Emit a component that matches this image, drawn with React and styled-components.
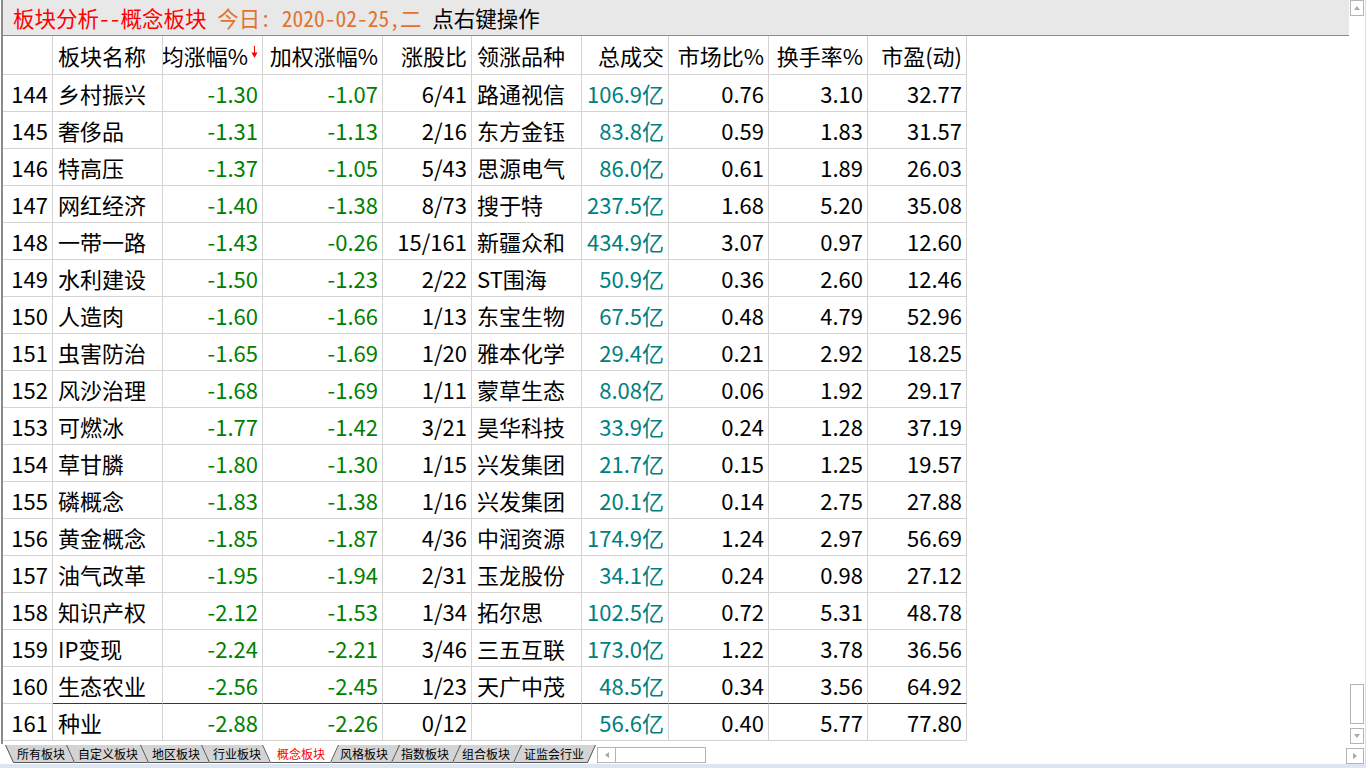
import React from 'react';
import styled, { createGlobalStyle } from 'styled-components';

const GlobalStyle = createGlobalStyle`
  html, body { margin: 0; padding: 0; background: #fff; }
  body { font-family: "Noto Sans CJK SC", "Noto Sans", sans-serif; overflow: hidden; }
  * { box-sizing: border-box; }
`;

const GRID = '#d4d4d4';
const COLS = '50px 110px 100px 120px 89px 110px 87px 100px 99px 99px';

const Frame = styled.div`
  width: 1366px;
  height: 768px;
  display: flex;
  flex-direction: column;
  background: #fff;
  overflow: hidden;
`;

const Window = styled.div`
  height: 764px;
  display: flex;
  flex-direction: column;
  border-right: 1px solid #dcdcdc;
`;

const TopArea = styled.div`
  height: 744px;
  display: flex;
`;

const Main = styled.div`
  width: 1348px;
  margin-left: 1px;
  border-left: 2px solid #8a8a8a;
  display: flex;
  flex-direction: column;
`;

const TitleBar = styled.div`
  height: 36px;
  flex: none;
  background: #e8e8e8;
  border-bottom: 1px solid #8c8c8c;
  display: flex;
  align-items: center;
  padding-left: 10px;
  font-family: "Noto Sans Mono CJK SC", "Noto Sans CJK SC", sans-serif;
  font-size: 21.5px;
  white-space: pre;
`;

const TitlePart = styled.span`
  color: ${p => p.$tone};
`;

const Table = styled.div`
  display: flex;
  flex-direction: column;
`;

const Row = styled.div`
  display: grid;
  grid-template-columns: ${COLS};
  width: 964px;
  height: ${p => p.$h}px;
`;

const Cell = styled.div`
  border-right: 1px solid ${GRID};
  border-bottom: 1px solid ${p => (p.$sel ? '#2a2aa8' : GRID)};
  display: flex;
  align-items: center;
  justify-content: ${p => (p.$left ? 'flex-start' : 'flex-end')};
  padding: 0 4px 0 5px;
  color: ${p => p.$color || '#000'};
  font-size: 22px;
  white-space: nowrap;
  overflow: hidden;
`;

const SortArrow = styled.svg`
  width: 7px;
  height: 12px;
  margin-left: 3px;
  margin-bottom: 7px;
  flex: none;
`;

const VScroll = styled.div`
  width: 16px;
  display: flex;
  flex-direction: column;
  padding: 0 1px;
`;

const ScrollBox = styled.div`
  width: ${p => p.$w || 14}px;
  height: ${p => p.$h || 16}px;
  border: 1px solid #b4b4b4;
  background: #fff;
  display: flex;
  align-items: center;
  justify-content: center;
  flex: none;
`;

const Track = styled.div`
  flex: 1;
  display: flex;
  flex-direction: column;
  justify-content: flex-end;
  padding-bottom: 4px;
`;

const Tri = styled.svg`
  width: 8px;
  height: 8px;
`;

const TabBar = styled.div`
  height: 20px;
  display: flex;
  align-items: flex-start;
  padding-left: 5px;
  padding-top: 1px;
`;

const TabStrip = styled.div`
  display: flex;
  height: 18px;
`;

const TabItem = styled.div`
  position: relative;
  width: ${p => p.$w}px;
  height: 18px;
  margin-left: ${p => (p.$first ? 0 : -16)}px;
  z-index: ${p => p.$z};
  padding-left: ${p => p.$pl}px;
  display: flex;
  align-items: center;
  font-size: 12px;
  color: ${p => (p.$active ? '#ff0000' : '#000')};
  flex: none;
`;

const TabShape = styled.svg`
  position: absolute;
  left: 0;
  top: 0;
  width: 100%;
  height: 100%;
  overflow: visible;
`;

const TabLabel = styled.span`
  position: relative;
  line-height: 1;
`;

const HScroll = styled.div`
  margin-left: 1px;
  margin-top: 2px;
  width: 109px;
  height: 16px;
  border: 1px solid #b4b4b4;
  display: flex;
  background: #fff;
`;

const HBtn = styled.div`
  width: 18px;
  border-right: 1px solid #b4b4b4;
  display: flex;
  align-items: center;
  justify-content: center;
`;

const CornerBtn = styled(ScrollBox)`
  margin-left: auto;
  margin-right: 1px;
  margin-top: 3px;
`;

const Band = styled.div`
  height: 4px;
  background: #dbe6f2;
`;

const GREEN = '#008000';
const TEAL = '#008080';

const rows = [
  ['144', '乡村振兴', '-1.30', '-1.07', '6/41', '路通视信', '106.9亿', '0.76', '3.10', '32.77'],
  ['145', '奢侈品', '-1.31', '-1.13', '2/16', '东方金钰', '83.8亿', '0.59', '1.83', '31.57'],
  ['146', '特高压', '-1.37', '-1.05', '5/43', '思源电气', '86.0亿', '0.61', '1.89', '26.03'],
  ['147', '网红经济', '-1.40', '-1.38', '8/73', '搜于特', '237.5亿', '1.68', '5.20', '35.08'],
  ['148', '一带一路', '-1.43', '-0.26', '15/161', '新疆众和', '434.9亿', '3.07', '0.97', '12.60'],
  ['149', '水利建设', '-1.50', '-1.23', '2/22', 'ST围海', '50.9亿', '0.36', '2.60', '12.46'],
  ['150', '人造肉', '-1.60', '-1.66', '1/13', '东宝生物', '67.5亿', '0.48', '4.79', '52.96'],
  ['151', '虫害防治', '-1.65', '-1.69', '1/20', '雅本化学', '29.4亿', '0.21', '2.92', '18.25'],
  ['152', '风沙治理', '-1.68', '-1.69', '1/11', '蒙草生态', '8.08亿', '0.06', '1.92', '29.17'],
  ['153', '可燃冰', '-1.77', '-1.42', '3/21', '昊华科技', '33.9亿', '0.24', '1.28', '37.19'],
  ['154', '草甘膦', '-1.80', '-1.30', '1/15', '兴发集团', '21.7亿', '0.15', '1.25', '19.57'],
  ['155', '磷概念', '-1.83', '-1.38', '1/16', '兴发集团', '20.1亿', '0.14', '2.75', '27.88'],
  ['156', '黄金概念', '-1.85', '-1.87', '4/36', '中润资源', '174.9亿', '1.24', '2.97', '56.69'],
  ['157', '油气改革', '-1.95', '-1.94', '2/31', '玉龙股份', '34.1亿', '0.24', '0.98', '27.12'],
  ['158', '知识产权', '-2.12', '-1.53', '1/34', '拓尔思', '102.5亿', '0.72', '5.31', '48.78'],
  ['159', 'IP变现', '-2.24', '-2.21', '3/46', '三五互联', '173.0亿', '1.22', '3.78', '36.56'],
  ['160', '生态农业', '-2.56', '-2.45', '1/23', '天广中茂', '48.5亿', '0.34', '3.56', '64.92'],
  ['161', '种业', '-2.88', '-2.26', '0/12', '', '56.6亿', '0.40', '5.77', '77.80'],
];

const colColor = [null, null, GREEN, GREEN, null, null, TEAL, null, null, null];
const colLeft = [false, true, false, false, false, true, false, false, false, false];

const headers = ['', '板块名称', '均涨幅%', '加权涨幅%', '涨股比', '领涨品种', '总成交', '市场比%', '换手率%', '市盈(动)'];

const tabs = [
  { label: '所有板块', w: 77, z: 1, pl: 12 },
  { label: '自定义板块', w: 90, z: 2, pl: 12 },
  { label: '地区板块', w: 77, z: 3, pl: 12 },
  { label: '行业板块', w: 77, z: 4, pl: 12 },
  { label: '概念板块', w: 77, z: 10, pl: 15, active: true },
  { label: '风格板块', w: 77, z: 8, pl: 17 },
  { label: '指数板块', w: 77, z: 7, pl: 17 },
  { label: '组合板块', w: 77, z: 6, pl: 17 },
  { label: '证监会行业', w: 90, z: 5, pl: 18 },
];

function Tab({ label, w, z, pl, active, first }) {
  return (
    <TabItem $w={w} $z={z} $pl={pl} $active={active} $first={first}>
      <TabShape viewBox={`0 0 ${w} 18`}>
        <polygon points={`0,0 ${w},0 ${w - 8},18 8,18`} fill={active ? '#ffffff' : '#d4d4d4'} />
        <polyline
          points={`0.5,0 8.5,17.5 ${w - 8.5},17.5 ${w - 0.5},0`}
          fill="none"
          stroke="#5a5a5a"
          strokeWidth="1"
        />
      </TabShape>
      <TabLabel>{label}</TabLabel>
    </TabItem>
  );
}

function Triangle({ dir }) {
  const pts = {
    up: '1,6 7,6 4,2',
    down: '1,2 7,2 4,6',
    left: '6,1 6,7 2,4',
    right: '2,1 2,7 6,4',
  }[dir];
  return (
    <Tri viewBox="0 0 8 8">
      <polygon points={pts} fill="#a8a8a8" />
    </Tri>
  );
}

export default function App() {
  return (
    <Frame>
      <GlobalStyle />
      <Window>
        <TopArea>
          <Main>
            <TitleBar>
              <TitlePart $tone="#ff0000">板块分析--概念板块</TitlePart>
              <TitlePart $tone="#e2732f"> 今日: 2020-02-25,二</TitlePart>
              <TitlePart $tone="#000"> 点右键操作</TitlePart>
            </TitleBar>
            <Table>
              <Row $h={39}>
                {headers.map((h, i) => (
                  <Cell key={i} $left={colLeft[i]}>
                    {h}
                    {i === 2 && (
                      <SortArrow viewBox="0 0 7 12">
                        <line x1="3.5" y1="0" x2="3.5" y2="9" stroke="#ff0000" strokeWidth="1" />
                        <polygon points="0.5,6.5 6.5,6.5 3.5,12" fill="#ff0000" />
                      </SortArrow>
                    )}
                  </Cell>
                ))}
              </Row>
              {rows.map((r, ri) => (
                <Row key={r[0]} $h={37}>
                  {r.map((v, ci) => (
                    <Cell
                      key={ci}
                      $left={colLeft[ci]}
                      $color={colColor[ci]}
                      $sel={ri === rows.length - 2 && ci > 0}
                    >
                      {v}
                    </Cell>
                  ))}
                </Row>
              ))}
            </Table>
          </Main>
          <VScroll>
            <ScrollBox>
              <Triangle dir="up" />
            </ScrollBox>
            <Track>
              <ScrollBox $h={40} />
            </Track>
            <ScrollBox>
              <Triangle dir="down" />
            </ScrollBox>
          </VScroll>
        </TopArea>
        <TabBar>
          <TabStrip>
            {tabs.map((t, i) => (
              <Tab key={t.label} {...t} first={i === 0} />
            ))}
          </TabStrip>
          <HScroll>
            <HBtn>
              <Triangle dir="left" />
            </HBtn>
          </HScroll>
          <CornerBtn $w={18} $h={16}>
            <Triangle dir="right" />
          </CornerBtn>
        </TabBar>
      </Window>
      <Band />
    </Frame>
  );
}
